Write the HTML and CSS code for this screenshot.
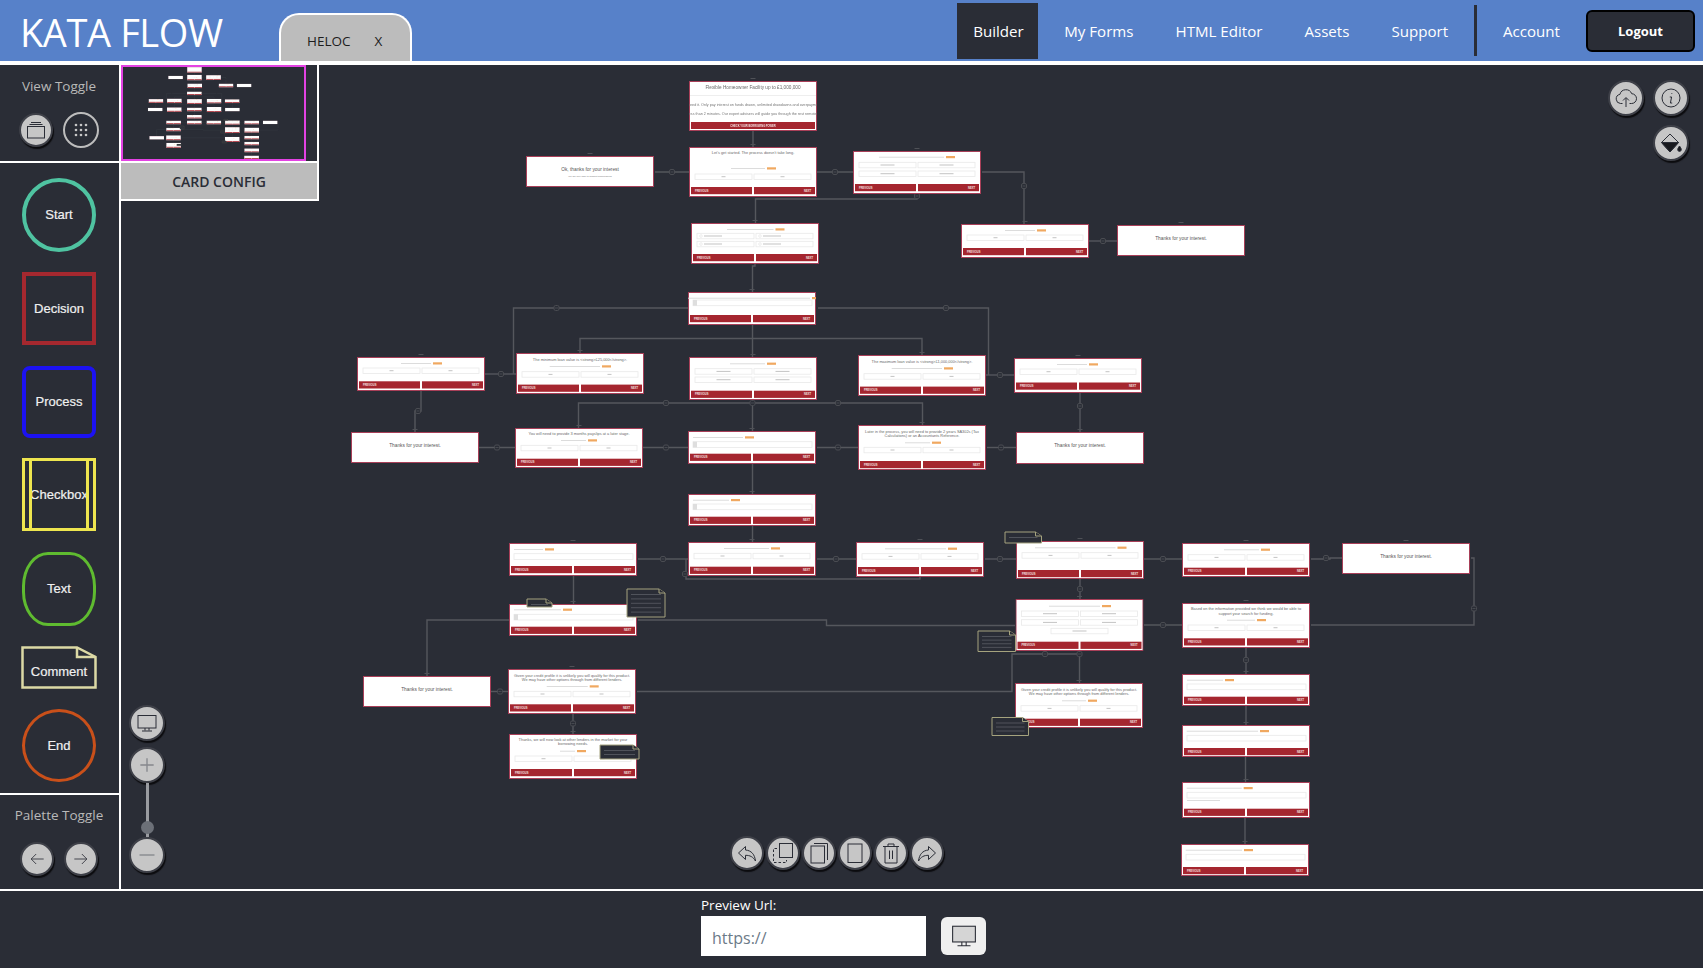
FILE: index.html
```html
<!DOCTYPE html>
<html lang="en">
<head>
    <meta charset="UTF-8">
    <meta name="viewport" content="width=device-width, initial-scale=1.0">
    <title>Kata Flow</title>
    <link rel="stylesheet" href="styles.css">
</head>
<body>

<header class="topbar">
    <div class="brand">KATA FLOW</div>
    <div class="form-tab"><span>HELOC</span><span class="form-tab-close">X</span></div>
    <nav class="topnav">
        <a class="nav-link nav-link-active">Builder</a>
        <a class="nav-link">My Forms</a>
        <a class="nav-link">HTML Editor</a>
        <a class="nav-link">Assets</a>
        <a class="nav-link">Support</a>
        <span class="nav-divider"></span>
        <a class="nav-link">Account</a>
        <button type="button" class="logout">Logout</button>
    </nav>
</header>

<main class="workspace">
    <aside class="sidebar">
        <section class="view-toggle">
            <div class="side-heading">View Toggle</div>
            <div class="side-buttons">
                <button type="button" class="round-btn">
                    <svg viewBox="0 0 24 24" class="icon icon-lg icon-thin"><path d="M7 4.500h10M5.500 6.500h13"/><rect x="3.500" y="8.500" width="17" height="11.500"/></svg>
                </button>
                <button type="button" class="round-btn round-btn-ghost">
                    <svg viewBox="0 0 24 24" class="icon-dots"><circle cx="6" cy="6" r="1.600"/><circle cx="12" cy="6" r="1.600"/><circle cx="18" cy="6" r="1.600"/><circle cx="6" cy="12" r="1.600"/><circle cx="12" cy="12" r="1.600"/><circle cx="18" cy="12" r="1.600"/><circle cx="6" cy="18" r="1.600"/><circle cx="12" cy="18" r="1.600"/><circle cx="18" cy="18" r="1.600"/></svg>
                </button>
            </div>
        </section>

        <section class="palette">
            <div class="shape shape-start">Start</div>
            <div class="shape shape-decision">Decision</div>
            <div class="shape shape-process">Process</div>
            <div class="shape shape-checkbox">Checkbox</div>
            <div class="shape shape-text">Text</div>
            <div class="shape shape-comment">
                <svg viewBox="0 0 76 43" class="comment-outline"><path d="M1.500 1.500H56L74.500 11V41.500H1.500Z"/><path d="M56 1.500V11H74.500"/></svg>
                <span>Comment</span>
            </div>
            <div class="shape shape-end">End</div>
        </section>

        <section class="palette-toggle">
            <div class="side-heading">Palette Toggle</div>
            <div class="side-buttons">
                <button type="button" class="round-btn">
                    <svg viewBox="0 0 24 24" class="icon icon-thin"><path d="M20 12H5M11 6l-6 6 6 6"/></svg>
                </button>
                <button type="button" class="round-btn">
                    <svg viewBox="0 0 24 24" class="icon icon-thin"><path d="M4 12h15M13 6l6 6-6 6"/></svg>
                </button>
            </div>
        </section>
    </aside>

    <section class="canvas">
        <svg id="flowMap" class="flow-map" viewBox="121 65 1582 824"></svg>

        <div class="config-panel">
            <div class="minimap">
                <svg viewBox="137 81 1560 793" class="minimap-view"><use href="#flow"/></svg>
            </div>
            <div class="config-title">CARD CONFIG</div>
        </div>

        <div class="canvas-tools">
            <button type="button" class="round-btn round-btn-lg">
                <svg viewBox="0 0 24 24" class="icon icon-lg icon-thin"><path d="M8.500 17.500H6.500a4.600 4.600 0 0 1-.6-9.100 6.200 6.200 0 0 1 11.800-.7 4.900 4.900 0 0 1-.2 9.800h-2"/><path d="M12 21v-9M9 14.500l3-3 3 3"/></svg>
            </button>
            <button type="button" class="round-btn round-btn-lg">
                <svg viewBox="0 0 24 24" class="icon icon-lg icon-thin"><circle cx="12" cy="12" r="9"/><path d="M12.800 7v.8M10.800 11h1.800l-1.200 6h1.800"/></svg>
            </button>
            <button type="button" class="round-btn round-btn-lg">
                <svg viewBox="0 0 24 24" class="icon icon-lg icon-thin"><path d="M11 3l8.500 8.500L11 21 2.500 11.500Z"/><path class="icon-fill" d="M2.500 11.500h17L11 21Z"/><path class="icon-fill" d="M20.500 15c1 1.600 1.800 2.500 1.800 3.600a1.800 1.800 0 0 1-3.600 0c0-1.100.8-2 1.800-3.600Z"/></svg>
            </button>
        </div>

        <div class="zoom-tools">
            <button type="button" class="round-btn round-btn-lg">
                <svg viewBox="0 0 24 24" class="icon icon-lg icon-thin"><rect x="3" y="4.500" width="18" height="12.500"/><path d="M10 17v2.500M14 17v2.500M7 20h10"/></svg>
            </button>
            <button type="button" class="round-btn round-btn-lg">
                <svg viewBox="0 0 24 24" class="icon icon-grey"><path d="M12 4v16M4 12h16"/></svg>
            </button>
            <div class="zoom-track"><span class="zoom-thumb"></span></div>
            <button type="button" class="round-btn round-btn-lg">
                <svg viewBox="0 0 24 24" class="icon icon-grey"><path d="M3 12h18"/></svg>
            </button>
        </div>

        <div class="edit-tools">
            <button type="button" class="round-btn">
                <svg viewBox="0 0 24 24" class="icon icon-lg icon-thin"><path d="M10.500 5.500 3.500 12l7 6.500v-4.200c4.500 0 7.500 1.400 10 5.700-.8-6.500-4-10.500-10-11Z"/></svg>
            </button>
            <button type="button" class="round-btn">
                <svg viewBox="0 0 24 24" class="icon icon-lg icon-thin"><rect x="8.500" y="2.500" width="13" height="14"/><path stroke-dasharray="2.500 2" d="M6 7.500H2.500v14h13v-2.500"/></svg>
            </button>
            <button type="button" class="round-btn">
                <svg viewBox="0 0 24 24" class="icon icon-lg icon-thin"><rect x="4" y="5" width="13.500" height="17"/><path d="M7 2.500h13.500V19"/></svg>
            </button>
            <button type="button" class="round-btn">
                <svg viewBox="0 0 24 24" class="icon icon-lg icon-thin"><rect x="5" y="3" width="14" height="18.500"/></svg>
            </button>
            <button type="button" class="round-btn">
                <svg viewBox="0 0 24 24" class="icon icon-lg icon-thin"><path d="M4 5.500h16M9 5.500V3h6v2.500M6 5.500V22h12V5.500M10.500 9.500V18M13.500 9.500V18"/></svg>
            </button>
            <button type="button" class="round-btn">
                <svg viewBox="0 0 24 24" class="icon icon-lg icon-thin"><path d="M13.500 5.500 20.500 12l-7 6.500v-4.200c-4.500 0-7.500 1.400-10 5.700.8-6.500 4-10.500 10-11Z"/></svg>
            </button>
        </div>
    </section>
</main>

<footer class="preview-bar">
    <div class="preview-field">
        <label for="previewUrl" class="preview-label">Preview Url:</label>
        <input type="text" id="previewUrl" class="preview-input" placeholder="https://">
    </div>
    <button type="button" class="preview-open">
        <svg viewBox="0 0 24 24" class="icon icon-thin"><rect x="1.500" y="3" width="21" height="14.500" fill="#d5d5d5"/><path d="M10 17.500v3M14 17.500v3M6 21h12"/></svg>
    </button>
</footer>

<script src="flow.js"></script>
</body>
</html>
```

FILE: styles.css
```css
* {
    box-sizing: border-box;
}

body {
    display: flex;
    flex-direction: column;
    width: 100%;
    height: 100vh;
    margin: 0;
    overflow: hidden;
    background-color: #2a2d36;
    color: #fff;
    font-family: "Open Sans", "Noto Sans", sans-serif;
}

button {
    font-family: inherit;
    cursor: pointer;
}

/* Top bar */
.topbar {
    display: flex;
    flex: none;
    align-items: stretch;
    height: 65px;
    border-bottom: 4px solid #fff;
    background-color: #5781c9;
}

.brand {
    width: 279px;
    padding: 7px 0 0 20px;
    font-size: 38px;
    letter-spacing: -0.4px;
    line-height: 50px;
    white-space: nowrap;
}

.form-tab {
    display: flex;
    align-items: center;
    gap: 24px;
    width: 133px;
    height: 48px;
    margin-top: 13px;
    padding: 6px 0 0 26px;
    border: 2px solid #fff;
    border-bottom: none;
    border-radius: 20px 20px 0 0;
    background-color: #bcbcbc;
    color: #1d1d1d;
    font-size: 13.5px;
}

.form-tab-close {
    font-size: 13.5px;
}

.topnav {
    display: flex;
    align-items: center;
    gap: 10px;
    margin-left: auto;
    padding-right: 8px;
}

.nav-link {
    display: flex;
    align-items: center;
    height: 56px;
    margin-top: 1px;
    padding: 0 16px;
    font-size: 15.1px;
    white-space: nowrap;
}

.nav-link-active {
    width: 81px;
    background-color: #2a2d36;
}

.nav-divider {
    width: 3px;
    height: 51px;
    background-color: #2a2d36;
}

.logout {
    width: 109px;
    height: 42px;
    margin-left: 0;
    border: 2px solid #000;
    border-radius: 6px;
    background-color: #2a2d36;
    color: #fff;
    font-size: 13px;
    font-weight: 700;
}

/* Page body */
.workspace {
    display: flex;
    flex: 1;
    min-height: 0;
}

.sidebar {
    display: flex;
    flex: none;
    flex-direction: column;
    width: 121px;
    border-right: 2px solid #fff;
}

.side-heading {
    padding-right: 1px;
    color: #b9b9b9;
    font-size: 13.5px;
    line-height: 20px;
    text-align: center;
}

.side-buttons {
    display: flex;
    justify-content: center;
    gap: 10px;
    margin-top: 17px;
    padding-right: 1px;
}

.view-toggle {
    flex: none;
    height: 98px;
    padding-top: 11px;
    border-bottom: 2px solid #fff;
}

.palette-toggle {
    flex: none;
    height: 96px;
    padding-top: 10px;
    border-top: 2px solid #fff;
}

.palette {
    display: flex;
    flex: 1;
    flex-direction: column;
    align-items: center;
    gap: 20.4px;
    padding: 15px 1px 0 0;
}

/* Palette shapes */
.shape {
    position: relative;
    display: flex;
    flex: none;
    align-items: center;
    justify-content: center;
    width: 74px;
    height: 73px;
    padding-bottom: 1px;
    color: #f0f0f0;
    font-family: "Liberation Sans", Arial, sans-serif;
    font-size: 13px;
    -webkit-text-stroke: 0.2px #f0f0f0;
}

.shape-start {
    height: 74px;
    border: 4px solid #4fc3a1;
    border-radius: 50%;
}

.shape-decision {
    border: 4px solid #a5282f;
}

.shape-process {
    height: 72px;
    border: 4px solid #1c12f2;
    border-radius: 8px;
}

.shape-checkbox {
    border: 3px solid #eee54f;
}

.shape-checkbox::before {
    content: "";
    position: absolute;
    top: 0;
    right: 4px;
    bottom: 0;
    left: 4px;
    border-right: 3px solid #eee54f;
    border-left: 3px solid #eee54f;
}

.shape-text {
    height: 74px;
    border: 3px solid #5fbb30;
    border-radius: 26px / 34px;
}

.shape-comment {
    width: 76px;
    height: 43px;
    padding: 8px 0 0;
}

.comment-outline {
    position: absolute;
    top: 0;
    left: 0;
    width: 76px;
    height: 43px;
    fill: none;
    stroke: #dcd9a5;
    stroke-width: 2.5;
}

.shape-comment span {
    position: relative;
}

.shape-end {
    border: 3px solid #c9501a;
    border-radius: 50%;
}

/* Round icon buttons */
.round-btn {
    display: flex;
    align-items: center;
    justify-content: center;
    flex: none;
    width: 34px;
    height: 34px;
    padding: 0;
    border: 2px solid #3e4048;
    border-radius: 50%;
    background-color: #c6c6c6;
    box-shadow: 1px 2px 1px #0c0c0f;
}

.round-btn-lg {
    width: 36px;
    height: 36px;
}

.round-btn-ghost {
    width: 36px;
    height: 36px;
    margin-top: -1px;
    border-color: #bdbdbd;
    background-color: transparent;
    box-shadow: none;
}

.icon {
    width: 20px;
    height: 20px;
    fill: none;
    stroke: #2a2d36;
    stroke-width: 1.6;
}

.icon-lg {
    width: 24px;
    height: 24px;
}

.icon-thin {
    stroke-width: 1;
}

.icon-grey {
    stroke: #85878c;
}

.icon-fill {
    fill: #17181d;
}

.icon-dots {
    width: 20px;
    height: 20px;
    fill: #c6c6c6;
}

/* Canvas */
.canvas {
    position: relative;
    flex: 1;
    min-width: 0;
}

.flow-map {
    position: absolute;
    top: 0;
    left: 0;
    width: 100%;
    height: 100%;
    filter: blur(0.4px);
}

.config-panel {
    position: absolute;
    top: 0;
    left: 0;
    width: 198px;
    border-right: 2px solid #fff;
    border-bottom: 2px solid #fff;
    background-color: #2a2d36;
}

.minimap {
    width: 185px;
    height: 96px;
    border: 2px solid #e342e3;
}

.minimap-view {
    display: block;
    width: 100%;
    height: 100%;
}

.config-title {
    height: 38px;
    border-top: 2px solid #fff;
    background-color: #bcbcbc;
    color: #2a2d36;
    font-size: 14px;
    font-weight: 600;
    line-height: 37px;
    text-align: center;
}

.canvas-tools {
    position: absolute;
    top: 15px;
    right: 14px;
    display: flex;
    flex-wrap: wrap;
    justify-content: flex-end;
    gap: 9px;
    width: 81px;
}

.zoom-tools {
    position: absolute;
    top: 640px;
    left: 8px;
    display: flex;
    flex-direction: column;
    align-items: center;
    width: 36px;
}

.zoom-tools .round-btn + .round-btn {
    margin-top: 6px;
}

.zoom-track {
    position: relative;
    width: 3px;
    height: 54px;
    background-color: #9a9ca1;
}

.zoom-thumb {
    position: absolute;
    top: 38px;
    left: -5px;
    width: 13px;
    height: 13px;
    border-radius: 50%;
    background-color: #6c7078;
}

.edit-tools {
    position: absolute;
    top: 771px;
    left: 609px;
    display: flex;
    gap: 2px;
}

/* Flow diagram bits */
.card-frame {
    fill: #fff;
    stroke: #a83f58;
    stroke-width: 1;
}

.card-bar {
    fill: #a5262f;
}

.card-bar-text {
    fill: #f3e4e4;
    font-family: "Liberation Sans", Arial, sans-serif;
    font-size: 2.6px;
    font-weight: 700;
}

.card-title {
    fill: #6a6a6a;
    font-family: "Liberation Sans", Arial, sans-serif;
    font-size: 3.9px;
    text-anchor: middle;
}

.card-title-start {
    font-size: 4.7px;
}

.card-title-lg {
    fill: #555;
    font-size: 4.8px;
}

.card-small {
    fill: #777;
    font-family: "Liberation Sans", Arial, sans-serif;
    font-size: 2.4px;
    text-anchor: middle;
}

.card-body {
    fill: #777;
    font-family: "Liberation Sans", Arial, sans-serif;
    font-size: 3.7px;
}

.card-line {
    fill: #dcdcdc;
}

.card-tag {
    fill: #f0a860;
}

.card-option {
    fill: #fff;
    stroke: #e9e9e9;
    stroke-width: 0.8;
}

.card-option-label {
    fill: #c4c4c4;
}

.card-square {
    fill: #dedede;
}

.edge {
    fill: none;
    stroke: #55575d;
    stroke-width: 1.4;
}

.edge-badge {
    fill: #2a2d36;
    stroke: #4a4c52;
    stroke-width: 1;
}

.edge-cap {
    fill: #4f5157;
}

.note {
    fill: #2a2d36;
    stroke: #a5a37e;
    stroke-width: 1;
}

.note-line {
    fill: #50535b;
}

/* Preview bar */
.preview-bar {
    display: flex;
    flex: none;
    align-items: flex-end;
    gap: 15px;
    height: 79px;
    padding: 0 0 12px 701px;
    border-top: 2px solid #fff;
}

.preview-field {
    display: flex;
    flex-direction: column;
}

.preview-label {
    font-size: 13.5px;
    line-height: 22px;
}

.preview-input {
    width: 225px;
    height: 40px;
    padding: 3px 11px 0;
    border: none;
    background-color: #fff;
    font-family: inherit;
    font-size: 16px;
}

.preview-input::placeholder {
    color: #6c7a88;
    opacity: 1;
}

.preview-open {
    display: flex;
    align-items: center;
    justify-content: center;
    width: 45px;
    height: 38px;
    margin-bottom: 1px;
    padding: 0;
    border: none;
    border-radius: 6px;
    background-color: #efefef;
}

.preview-open .icon {
    width: 26px;
    height: 26px;
}
```

FILE: flow.js
```js
// Flow map data, page coordinates. All cards are 128 wide.
const OK_TEXT = 'Thanks for your interest.';
const LOW_CREDIT = ['Given your credit profile it is unlikely you will qualify for this product.',
    'We may have other options through from different lenders.'];

const cards = [
    { x: 689, y: 81, h: 50, start: true },
    { x: 689, y: 147, h: 50, title: ["Let's get started. The process doesn't take long."], ty: [7], line: [42, 76, 21], rows: [27], bar: 40 },
    { x: 526, y: 156, h: 31, note: 'Ok, thanks for your interest', sub: 'We are only able to support homeowners' },
    { x: 853, y: 151, h: 43, line: [26, 91, 5.7], rows: [11.3, 20], bar: 33 },
    { x: 691, y: 223, h: 41, line: [36, 82.5, 6], rows: [10.3, 18.3], radio: true, bar: 31 },
    { x: 961, y: 224, h: 34, line: [44, 74, 6], rows: [11], bar: 24 },
    { x: 1117, y: 225, h: 31, note: OK_TEXT },
    { x: 688, y: 292, h: 33, line: [0, 122, 5.7], box: 8, square: true, bar: 23 },
    { x: 516, y: 353, h: 41, title: ['The minimum loan value is <strong>£25,000</strong>.'], ty: [7.5], line: [33.7, 84, 13], rows: [18.7], bar: 31.6 },
    { x: 689, y: 357, h: 43, line: [41, 76, 6.3], rows: [11.7, 20], bar: 33.7 },
    { x: 858, y: 355, h: 41, title: ['The maximum loan value is <strong>£1,000,000</strong>.'], ty: [7.5], line: [33.7, 84, 13], rows: [18.7], bar: 31.6 },
    { x: 357, y: 357, h: 34, line: [44, 74, 6], rows: [11], bar: 24.3 },
    { x: 1014, y: 358, h: 35, line: [43, 73, 6], rows: [11], bar: 24.5 },
    { x: 351, y: 432, h: 31, note: OK_TEXT },
    { x: 515, y: 428, h: 40, title: ['You will need to provide 3 months payslips at a later stage.'], ty: [7], line: [46, 71, 12], rows: [17.3], bar: 30.7 },
    { x: 688, y: 431, h: 33, line: [5, 55, 6], box: 10.7, square: true, bar: 22.7 },
    { x: 858, y: 425, h: 45, title: ['Later in the process, you will need to provide 2 years SA302s (Tax', 'Calculations) or an Accountants Reference.'], ty: [7.5, 11.5], line: [47, 72, 17.3], rows: [22.3], bar: 36 },
    { x: 1016, y: 432, h: 32, note: OK_TEXT },
    { x: 688, y: 494, h: 32, line: [5, 41, 5.7], box: 10, square: true, bar: 22.7 },
    { x: 509, y: 543, h: 33, line: [5, 34, 6], box: 10.7, bar: 23 },
    { x: 688, y: 542, h: 34, line: [36, 81, 6], rows: [11.3], bar: 24.7 },
    { x: 856, y: 542, h: 35, line: [29, 90, 6.3], rows: [11.7], bar: 25 },
    { x: 1016, y: 541, h: 38, line: [19, 99.5, 6.3], rows: [11.7], bar: 29 },
    { x: 1182, y: 543, h: 34, line: [42, 77, 6.3], rows: [11.7], bar: 24.7 },
    { x: 1342, y: 543, h: 31, note: OK_TEXT },
    { x: 509, y: 604, h: 32, line: [5, 52, 5.3], box: 10.3, square: true, bar: 22.7 },
    { x: 1015.5, y: 599, h: 52, line: [33.5, 84.5, 6.7], rows: [12, 20.7], extra: 29.3, bar: 42.7 },
    { x: 1182, y: 603, h: 45, title: ['Based on the information provided we think we would be able to', 'support your search for funding.'], ty: [6.5, 11.5], line: [45, 73, 16.7], rows: [22], bar: 35.3 },
    { x: 363, y: 676, h: 31, note: OK_TEXT },
    { x: 508, y: 669, h: 45, title: LOW_CREDIT, ty: [7.5, 11.5], line: [38.7, 79.7, 17], rows: [22.3], bar: 35.3 },
    { x: 1015, y: 683, h: 45, title: LOW_CREDIT, ty: [7.5, 11.5], line: [47, 71, 17.3], rows: [22.7], bar: 35.7 },
    { x: 1182, y: 674, h: 32, line: [5, 41, 5.7], box: 10, bar: 22.7 },
    { x: 1182, y: 725, h: 32, line: [4.7, 76, 5.7], box: 10.3, bar: 23 },
    { x: 509, y: 734, h: 45, title: ['Thanks, we will now look at other lenders in the market for your', 'borrowing needs.'], ty: [6.8, 11], line: [51, 66, 16.7], rows: [22], bar: 35 },
    { x: 1182, y: 782, h: 36, line: [4.7, 59.7, 5.7], box: 10.3, hint: 18, bar: 26.7 },
    { x: 1181, y: 844, h: 32, line: [4.7, 61, 5.7], box: 10.3, bar: 23 }
];

// Each edge is a list of x,y points
const edges = [
    [753, 131, 753, 147],
    [655, 172, 689, 172],
    [817, 172, 853, 172],
    [917, 194, 917, 199, 755.5, 199, 755.5, 223],
    [982, 172, 1024, 172, 1024, 224],
    [1089, 241, 1117, 241],
    [755, 264, 755, 266, 752.5, 266, 752.5, 292],
    [688, 308, 513.5, 308, 513.5, 374],
    [485, 374, 516, 374],
    [818, 308, 988.5, 308, 988.5, 375],
    [986, 375, 1014, 375],
    [752.5, 325, 752.5, 357],
    [580, 353, 580, 338.5, 922, 338.5, 922, 355],
    [752.5, 400, 752.5, 431],
    [578.5, 428, 578.5, 403, 922.5, 403, 922.5, 425],
    [421, 391, 421, 411, 415, 411, 415, 432],
    [479, 447.5, 515, 447.5],
    [643, 447.5, 688, 447.5],
    [817, 447.5, 858, 447.5],
    [987, 447.5, 1016, 447.5],
    [1080, 393, 1080, 432],
    [752.5, 464, 752.5, 494],
    [752.5, 526, 752.5, 542],
    [638, 559, 688, 559],
    [686, 559, 686, 579, 920, 579, 920, 577],
    [573.5, 576, 573.5, 604],
    [817, 559, 856, 559],
    [985, 559, 1016, 559],
    [1144, 559, 1182, 559],
    [1311, 559, 1330, 559, 1330, 558, 1342, 558],
    [1471, 558, 1474, 558, 1474, 625, 1311, 625],
    [1080, 579, 1080, 599],
    [1144, 625, 1182, 625],
    [638, 620, 826.5, 620, 826.5, 625.5, 1015, 625.5],
    [509, 620, 427, 620, 427, 676],
    [491, 691.5, 508, 691.5],
    [637, 691.5, 1012, 691.5, 1012, 654, 1079.5, 654],
    [1079.5, 651, 1079.5, 683],
    [573, 714, 573, 734],
    [1246, 648, 1246, 674],
    [1246, 706, 1246, 725],
    [1245.5, 757, 1245.5, 782],
    [1245, 818, 1245, 844]
];

const badges = [
    [672, 172], [835, 172], [917, 196], [1024, 186], [1103, 241], [556.5, 308], [501, 374], [946, 308],
    [1000, 375], [666, 403], [752.5, 403], [838, 403], [418, 411], [497, 447.5], [666, 447.5], [838, 447.5],
    [1001, 447.5], [1080, 406], [663, 559], [685, 574], [836, 559], [1000, 559], [1163, 559], [1326, 558],
    [1474, 608.5], [1080, 589], [1163, 625], [500, 691.5], [1045, 654], [1079.5, 654], [573, 723.5], [1246, 660]
];

const notes = [
    { x: 527, y: 599, w: 25, h: 8, lines: 1 },
    { x: 627, y: 589, w: 38, h: 28, lines: 5 },
    { x: 600, y: 745, w: 39, h: 14, lines: 2 },
    { x: 1005, y: 532, w: 36.5, h: 11, lines: 1 },
    { x: 978, y: 631, w: 37.5, h: 20.5, lines: 4 },
    { x: 992, y: 717.5, w: 36.5, h: 18, lines: 3 }
];

function rect(cls, x, y, w, h) {
    return `<rect class="${cls}" x="${x}" y="${y}" width="${w}" height="${h}"/>`;
}

function escapeText(s) {
    return s.replace(/</g, '&lt;').replace(/>/g, '&gt;');
}

function cardBars(card) {
    const y = card.bar;
    return rect('card-bar', 2, y, 61, 7.2) + rect('card-bar', 65, y, 61, 7.2)
        + `<text class="card-bar-text" x="6" y="${y + 4.6}">PREVIOUS</text>`
        + `<text class="card-bar-text" x="122" y="${y + 4.6}" text-anchor="end">NEXT</text>`;
}

function cardOptions(card) {
    let out = '';
    (card.rows || []).forEach(y => {
        [6, 65].forEach(x => {
            out += rect('card-option', x, y, 57, 5.5);
            if (card.radio) {
                out += `<circle class="card-option" cx="${x + 4}" cy="${y + 2.75}" r="1.3"/>`;
                out += rect('card-option-label', x + 7, y + 2.2, 18, 1);
            } else {
                const w = card.rows.length > 1 ? 14 : 4;
                out += rect('card-option-label', x + 28.5 - w / 2, y + 2.2, w, 1);
            }
        });
    });
    if (card.extra) {
        out += rect('card-option', 35.5, card.extra, 57, 5.5) + rect('card-option-label', 57, card.extra + 2.2, 14, 1);
    }
    if (card.box) {
        out += rect('card-option', 5, card.box, 119, 5.7);
        if (card.square) out += rect('card-square', 5, card.box, 4, 5.7);
    }
    if (card.hint) out += rect('card-line', 5, card.hint, 33, 1);
    return out;
}

function cardInner(card) {
    if (card.start) {
        return '<text class="card-title card-title-start" x="64" y="7.5">Flexible Homeowner Facility up to £1,000,000</text>'
            + rect('card-line', 1, 14, 126, 0.5)
            + '<text class="card-body" x="-1" y="24.5">need it.   Only pay interest on funds drawn, unlimited drawdowns and overpayments</text>'
            + '<text class="card-body" x="-1" y="33.5">less than 2 minutes. Our expert advisers will guide you through the rest remotely</text>'
            + rect('card-bar', 2, 41, 124, 7)
            + '<text class="card-bar-text" x="64" y="45.5" text-anchor="middle">CHECK YOUR BORROWING POWER</text>';
    }
    if (card.note) {
        let out = `<text class="card-title card-title-lg" x="64" y="${card.sub ? 14.5 : 15}">${card.note}</text>`;
        if (card.sub) out += `<text class="card-small" x="64" y="21">${card.sub}</text>`;
        return out;
    }
    let out = '';
    (card.title || []).forEach((line, i) => {
        out += `<text class="card-title" x="64" y="${card.ty[i]}">${escapeText(line)}</text>`;
    });
    const [from, to, y] = card.line;
    out += rect('card-line', from, y, to - from, 1) + rect('card-tag', to + 2, y - 0.7, 9, 2.2);
    return out + cardOptions(card) + cardBars(card);
}

function drawCard(card) {
    return `<svg x="${card.x}" y="${card.y}" width="128" height="${card.h}">`
        + rect('card-frame', 0.5, 0.5, 127, card.h - 1) + cardInner(card) + '</svg>'
        + rect('edge-cap', card.x + 61.5, card.y - 3, 5, 1);
}

function drawEdge(points) {
    return `<polyline class="edge" points="${points.join(' ')}"/>`;
}

function drawBadge(pos) {
    const [x, y] = pos;
    return `<rect class="edge-badge" x="${x - 2.5}" y="${y - 2.5}" width="5" height="5" rx="1.5"/>`
        + rect('edge-cap', x - 1.5, y - 0.4, 3, 0.8);
}

function drawNote(note) {
    const { x, y, w, h, lines } = note;
    const r = x + w;
    let out = `<path class="note" d="M${x} ${y}H${r - 6}L${r} ${y + 4}V${y + h}H${x}Z"/>`
        + `<path class="note" d="M${r - 6} ${y}V${y + 4}H${r}"/>`;
    for (let i = 0; i < lines; i++) {
        out += rect('note-line', x + 4, y + 5 + i * (h - 6) / lines, w - 8, 1);
    }
    return out;
}

document.getElementById('flowMap').innerHTML = '<g id="flow">'
    + edges.map(drawEdge).join('')
    + badges.map(drawBadge).join('')
    + cards.map(drawCard).join('')
    + notes.map(drawNote).join('')
    + '</g>';
```
